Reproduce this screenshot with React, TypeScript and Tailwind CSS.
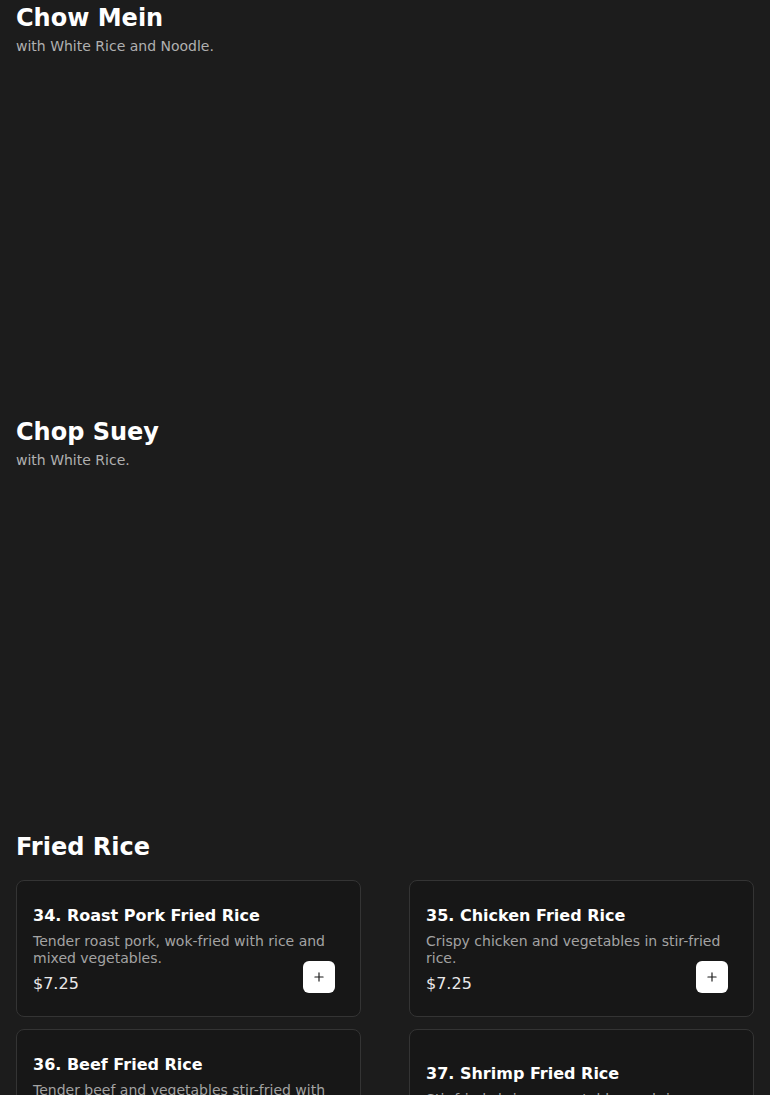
import { Plus } from 'lucide-react';

type Item = { id: number; name: string; desc: string; price: string };

const friedRice: Item[] = [
  { id: 34, name: 'Roast Pork Fried Rice', desc: 'Tender roast pork, wok-fried with rice and mixed vegetables.', price: '$7.25' },
  { id: 35, name: 'Chicken Fried Rice', desc: 'Crispy chicken and vegetables in stir-fried rice.', price: '$7.25' },
  { id: 36, name: 'Beef Fried Rice', desc: 'Tender beef and vegetables stir-fried with savory rice.', price: '$7.95' },
  { id: 37, name: 'Shrimp Fried Rice', desc: 'Stir-fried shrimp, vegetables and rice.', price: '$7.95' },
];

function MenuCard({ item }: { item: Item }) {
  return (
    <div className="flex flex-col justify-center rounded-lg border border-[#343434] bg-[#171717] px-4 pt-[23px] pb-[20px]">
      <h3 className="text-base font-bold leading-6 text-white">
        {item.id}. {item.name}
      </h3>
      <p className="mt-[5px] text-sm leading-[17px] text-[#a3a3a3]">{item.desc}</p>
      <div className="mt-[5px] flex h-6 items-center justify-between">
        <span className="text-base leading-6 text-[#e8e8e8]">{item.price}</span>
        <button className="mr-[9px] flex h-8 w-8 -translate-y-[7px] items-center justify-center rounded-md bg-white text-[#1a1a1a]">
          <Plus size={14} strokeWidth={2} />
        </button>
      </div>
    </div>
  );
}

function Section({ title, subtitle, items, minH }: { title: string; subtitle?: string; items: Item[]; minH?: string }) {
  return (
    <section className={minH}>
      <h2 className="text-2xl font-bold leading-8 text-white">{title}</h2>
      {subtitle && <p className="mt-[2px] text-sm leading-5 text-[#b0b0b0]">{subtitle}</p>}
      {items.length > 0 && (
        <div className="mt-[17px] grid grid-cols-2 gap-x-12 gap-y-3">
          {items.map((item) => (
            <MenuCard key={item.id} item={item} />
          ))}
        </div>
      )}
    </section>
  );
}

export default function App() {
  return (
    <div
      className="min-h-screen bg-[#1c1c1c] px-4 pt-[2px]"
      style={{ fontFamily: '"DejaVu Sans", sans-serif' }}
    >
      <Section title="Chow Mein" subtitle="with White Rice and Noodle." items={[]} minH="h-[414px]" />
      <Section title="Chop Suey" subtitle="with White Rice." items={[]} minH="h-[415px]" />
      <Section title="Fried Rice" items={friedRice} />
    </div>
  );
}
